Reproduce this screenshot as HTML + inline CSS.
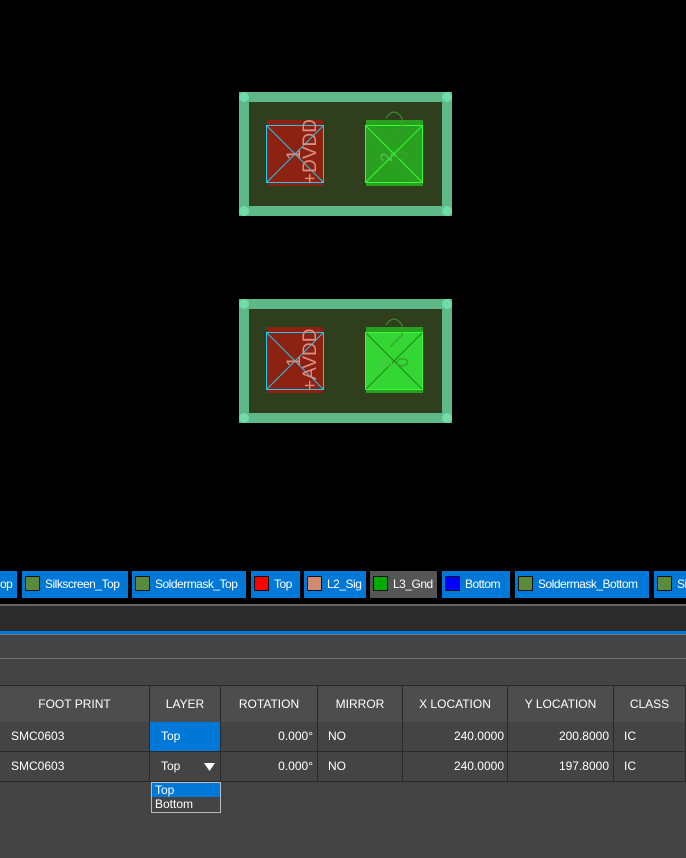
<!DOCTYPE html>
<html><head><style>
body{margin:0;width:686px;height:858px;background:#444;position:relative;overflow:hidden;font-family:"Liberation Sans",sans-serif;font-size:12px;color:#fff}
.a{position:absolute}
.tab{position:absolute;top:571px;height:27px;background:#0078d7;line-height:27px;font-size:12px;letter-spacing:-0.5px;color:#fff;white-space:nowrap;overflow:hidden}
.sw{display:inline-block;width:13px;height:13px;border:1px solid #111;vertical-align:-3px;margin:0 5px 0 3px}
.row{position:absolute;left:0;width:686px;border-bottom:1px solid #2a2a2a}
.c{position:absolute;top:0;height:100%;border-right:1px solid #2a2a2a;box-sizing:border-box;line-height:inherit}
</style></head><body>
<div class="a" style="left:0;top:0;width:686px;height:604px;background:#000"></div>
<svg class="a" style="left:0;top:0" width="686" height="570">
<g id="c1">
<rect x="244" y="97" width="203" height="114" fill="#2f3f1e" stroke="#5fb888" stroke-width="10"/>
<circle cx="244" cy="97" r="5" fill="#6fdcaa"/><circle cx="447" cy="97" r="5" fill="#6fdcaa"/>
<circle cx="244" cy="211" r="5" fill="#6fdcaa"/><circle cx="447" cy="211" r="5" fill="#6fdcaa"/>
<rect x="267" y="120" width="56" height="66" fill="#8e2212"/>
<rect x="266.5" y="125.5" width="57" height="57" fill="none" stroke="#22c8f0"/>
<line x1="267" y1="126" x2="323" y2="182" stroke="#22c8f0"/><line x1="323" y1="126" x2="267" y2="182" stroke="#22c8f0"/>
<rect x="366" y="120" width="57" height="66" fill="#2aa020"/>
<rect x="365.5" y="125.5" width="57" height="57" fill="none" stroke="#33ff33"/>
<line x1="366" y1="126" x2="422" y2="182" stroke="#33ff33"/><line x1="422" y1="126" x2="366" y2="182" stroke="#33ff33"/>
<path d="M386 118 q8 -12 16 0 v10 l-12 12" fill="none" stroke="#3c9a30"/>
<text transform="translate(316 184) rotate(-90)" font-size="19" fill="#d88e80">+DVDD</text>
<text transform="translate(300 160) rotate(-90)" font-size="19" fill="#d88e80">1</text>
<text transform="translate(392 162) rotate(-90)" font-size="17" fill="#55c050">2</text>
<text transform="translate(408 160) rotate(-90)" font-size="17" fill="#3aa030">0</text>
</g>
<g transform="translate(0 207)">
<rect x="244" y="97" width="203" height="114" fill="#2f3f1e" stroke="#5fb888" stroke-width="10"/>
<circle cx="244" cy="97" r="5" fill="#6fdcaa"/><circle cx="447" cy="97" r="5" fill="#6fdcaa"/>
<circle cx="244" cy="211" r="5" fill="#6fdcaa"/><circle cx="447" cy="211" r="5" fill="#6fdcaa"/>
<rect x="267" y="120" width="56" height="66" fill="#8e2212"/>
<rect x="266.5" y="125.5" width="57" height="57" fill="none" stroke="#22c8f0"/>
<line x1="267" y1="126" x2="323" y2="182" stroke="#22c8f0"/><line x1="323" y1="126" x2="267" y2="182" stroke="#22c8f0"/>
<rect x="366" y="120" width="57" height="66" fill="#2aa020"/>
<rect x="365.5" y="125.5" width="57" height="57" fill="#33d633" stroke="#33ff33"/>
<line x1="366" y1="126" x2="422" y2="182" stroke="#1a8a1a"/><line x1="422" y1="126" x2="366" y2="182" stroke="#1a8a1a"/>
<path d="M386 118 q8 -12 16 0 v10 l-12 12" fill="none" stroke="#3c9a30"/>
<text transform="translate(316 184) rotate(-90)" font-size="19" fill="#d88e80">+AVDD</text>
<text transform="translate(300 160) rotate(-90)" font-size="19" fill="#d88e80">1</text>
<text transform="translate(392 162) rotate(-90)" font-size="17" fill="#55c050">2</text>
<text transform="translate(408 160) rotate(-90)" font-size="17" fill="#3aa030">0</text>
</g>
</svg>
<div class="tab" style="left:0;width:17px">op</div>
<div class="tab" style="left:22px;width:106px"><span class="sw" style="background:#5a8a3c"></span>Silkscreen_Top</div>
<div class="tab" style="left:132px;width:114px"><span class="sw" style="background:#5a8a3c"></span>Soldermask_Top</div>
<div class="tab" style="left:251px;width:49px"><span class="sw" style="background:#f00"></span>Top</div>
<div class="tab" style="left:304px;width:62px"><span class="sw" style="background:#d08a70"></span>L2_Sig</div>
<div class="tab" style="left:370px;width:67px;background:#555"><span class="sw" style="background:#0a0"></span>L3_Gnd</div>
<div class="tab" style="left:442px;width:68px"><span class="sw" style="background:#00f"></span>Bottom</div>
<div class="tab" style="left:515px;width:134px"><span class="sw" style="background:#5a8a3c"></span>Soldermask_Bottom</div>
<div class="tab" style="left:654px;width:32px"><span class="sw" style="background:#5a8a3c"></span>Si</div>
<div class="a" style="left:0;top:604px;width:686px;height:2px;background:#666"></div>
<div class="a" style="left:0;top:606px;width:686px;height:25px;background:#2b2b2b"></div>
<div class="a" style="left:0;top:631px;width:686px;height:3px;background:#0078d7"></div>
<div class="a" style="left:0;top:634px;width:686px;height:1px;background:#777"></div>
<div class="a" style="left:0;top:658px;width:686px;height:1px;background:#777"></div>
<div class="row" style="top:685px;height:37px;line-height:37px;background:#4d4d4d;border-top:1px solid #2a2a2a;text-align:center">
<div class="c" style="left:0;width:150px">FOOT PRINT</div>
<div class="c" style="left:150px;width:71px">LAYER</div>
<div class="c" style="left:221px;width:97px">ROTATION</div>
<div class="c" style="left:318px;width:85px">MIRROR</div>
<div class="c" style="left:403px;width:105px">X LOCATION</div>
<div class="c" style="left:508px;width:106px">Y LOCATION</div>
<div class="c" style="left:614px;width:72px">CLASS</div>
</div>
<div class="row" style="top:722px;height:29px;line-height:29px;background:#444">
<div class="c" style="left:0;width:150px;padding-left:11px">SMC0603</div>
<div class="c" style="left:150px;width:71px;padding-left:11px;background:#0078d7">Top</div>
<div class="c" style="left:221px;width:97px;text-align:right;padding-right:4px">0.000°</div>
<div class="c" style="left:318px;width:85px;padding-left:10px">NO</div>
<div class="c" style="left:403px;width:105px;text-align:right;padding-right:3px">240.0000</div>
<div class="c" style="left:508px;width:106px;text-align:right;padding-right:4px">200.8000</div>
<div class="c" style="left:614px;width:72px;padding-left:10px">IC</div>
</div>
<div class="row" style="top:752px;height:29px;line-height:29px;background:#444">
<div class="c" style="left:0;width:150px;padding-left:11px">SMC0603</div>
<div class="c" style="left:150px;width:71px;padding-left:11px">Top<svg style="position:absolute;left:54px;top:11px" width="11" height="8"><path d="M0 0H11L5.5 8Z" fill="#fff"/></svg></div>
<div class="c" style="left:221px;width:97px;text-align:right;padding-right:4px">0.000°</div>
<div class="c" style="left:318px;width:85px;padding-left:10px">NO</div>
<div class="c" style="left:403px;width:105px;text-align:right;padding-right:3px">240.0000</div>
<div class="c" style="left:508px;width:106px;text-align:right;padding-right:4px">197.8000</div>
<div class="c" style="left:614px;width:72px;padding-left:10px">IC</div>
</div>
<div class="a" style="left:151px;top:782px;width:68px;height:29px;border:1px solid #bbb;background:#444;font-size:12px;line-height:14px">
<div style="background:#0078d7;padding-left:3px">Top</div><div style="padding-left:3px">Bottom</div></div>
</body></html>
